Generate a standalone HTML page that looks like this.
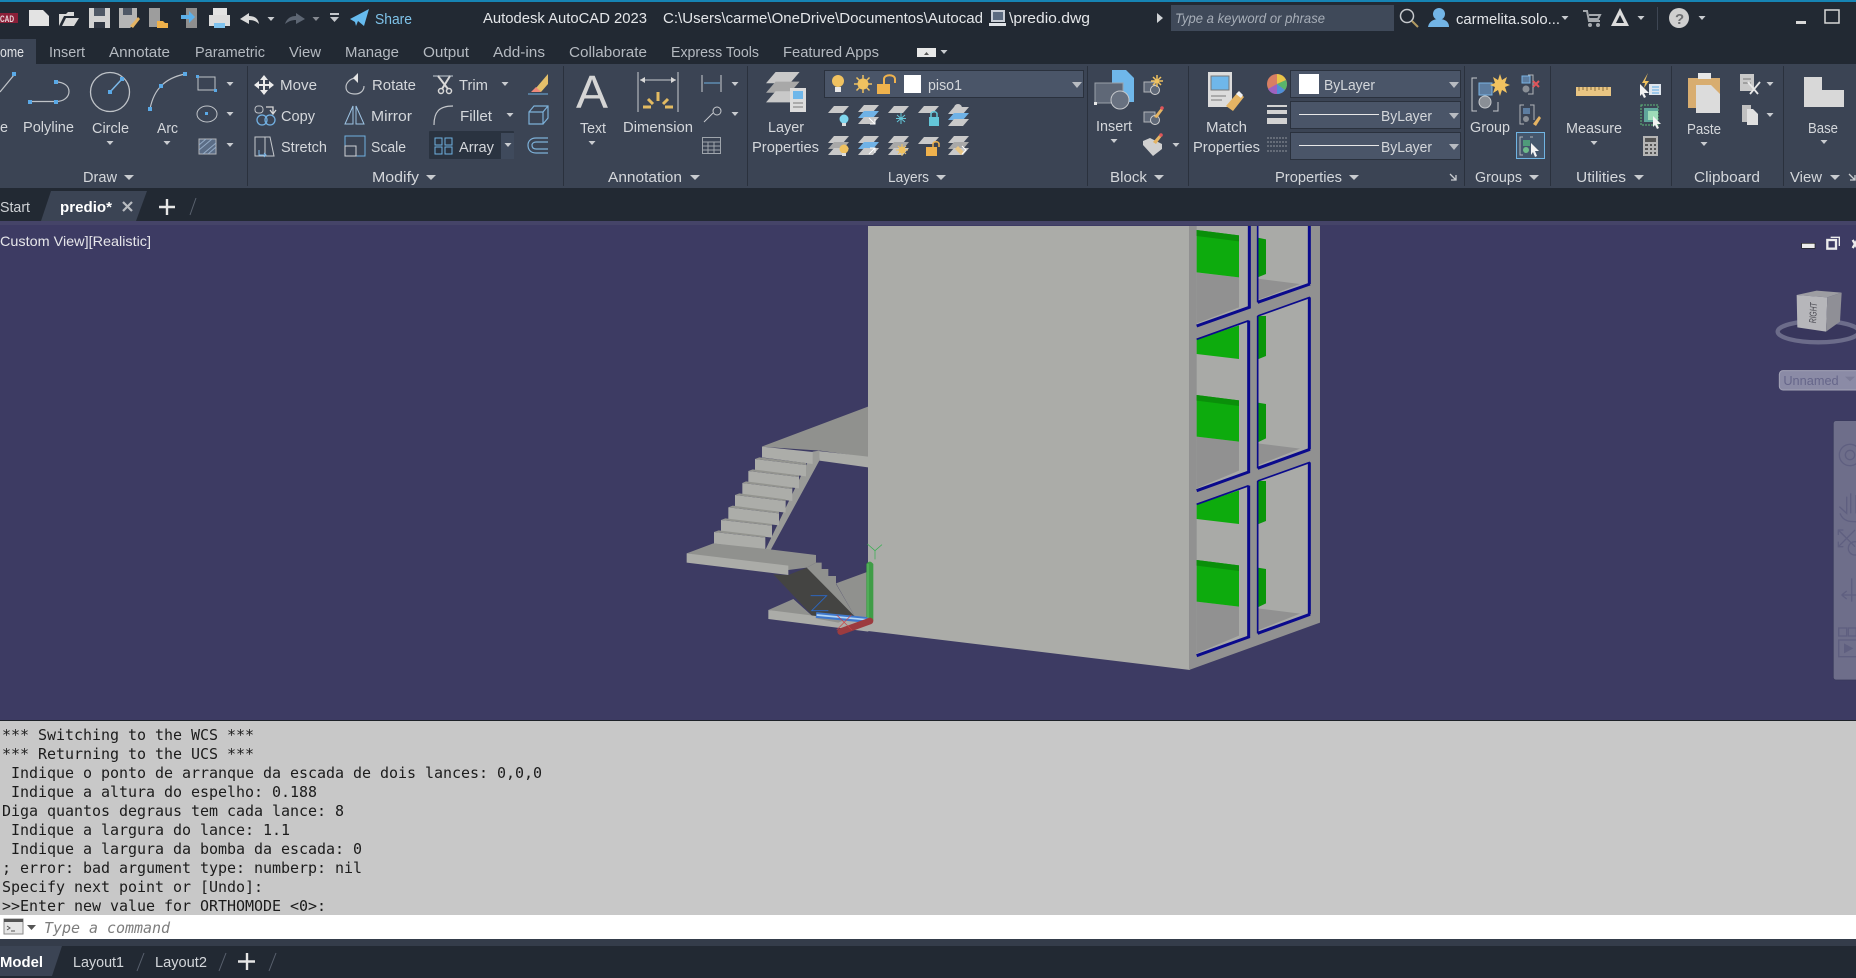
<!DOCTYPE html>
<html><head><meta charset="utf-8"><title>AutoCAD</title>
<style>
html,body{margin:0;padding:0;background:#222933;width:1856px;height:978px;overflow:hidden}
svg{display:block;position:absolute;left:0;top:0}
text{font-family:"Liberation Sans",sans-serif;font-size:15px;fill:#d4d7db}
.t{fill:#b5bac1}
.m{font-family:"DejaVu Sans Mono","Liberation Mono",monospace;font-size:15px;fill:#1c1c1c;letter-spacing:-.03px;white-space:pre}
</style></head><body>
<svg width="1856" height="978" viewBox="0 0 1856 978" xmlns="http://www.w3.org/2000/svg">
<defs>
<path id="d" d="M-3.5-2h7L0 2z" fill="#c9ccd0"/>
<g id="p"><path d="M0 7L6 0H21L15 7z" fill="#c9c9c9"/></g>
<g id="s"><path d="M0 7L6 0H21L15 7z" fill="#c9c9c9"/><path d="M0 13L6 6H21L15 13z" fill="#a8a8a8"/><path d="M0 19L6 12H21L15 19z" fill="#c9c9c9"/></g>
<g id="sb"><path d="M0 7L6 0H21L15 7z" fill="#c9c9c9"/><path d="M0 13L6 6H21L15 13z" fill="#6fb2e6"/><path d="M0 19L6 12H21L15 19z" fill="#c9c9c9"/></g>
</defs>

<!-- base bars -->
<rect width="1856" height="978" fill="#222933"/>
<rect width="1856" height="2" fill="#1684b4"/>
<rect y="64" width="1856" height="124" fill="#3b4454"/>
<rect y="39" width="36" height="25" fill="#3b4454"/>

<!-- title bar icons -->
<rect x="0" y="13" width="18" height="10" fill="#8b1f38"/>
<text x="0" y="22" style="font-size:9px;font-weight:bold;fill:#e8d8dc" textLength="14" lengthAdjust="spacingAndGlyphs">CAD</text>
<path d="M29 10H43L49 16V26H29z" fill="#e3e3e3"/>
<path d="M59 14H66L68 12H74V16H64L59 26zM62 26L66 18H79L74 26z" fill="#d9d9d9"/>
<path d="M89 8H110V28H89z" fill="#d2d2d2"/><rect x="94" y="8" width="11" height="8" fill="#4f5866"/><rect x="94" y="22" width="11" height="6" fill="#2f3642"/>
<path d="M119 8H137V22L130 28H119z" fill="#b5b5b5"/><rect x="123" y="8" width="9" height="7" fill="#4f5866"/><path d="M130 26L138 17L140 19L133 28z" fill="#e5b463"/>
<path d="M149 8H160V27H149z" fill="#9d9d9d"/><path d="M157 21H163L165 23H168V28H157z" fill="#eeb04a"/>
<path d="M186 8H197V28H186z" fill="#8f8f8f"/><path d="M181 15H189V11L195 17L189 23V19H181z" fill="#5cb0ea"/>
<path d="M213 8H227V15H213z" fill="#e3e3e3"/><path d="M209 15H230V26H225V23H214V26H209z" fill="#dcdcdc"/><rect x="214" y="23" width="11" height="5" fill="#7ec2ee"/>
<path d="M240 19L249 13V16C254 16 258 18 259 24C256 21 253 20 249 20V24z" fill="#dadada"/>
<use href="#d" x="271" y="19"/>
<path d="M305 19L296 13V16C291 16 287 18 285 24C289 21 292 20 296 20V24z" fill="#5d6673"/>
<use href="#d" x="316" y="19" opacity=".6"/>
<path d="M330 13h9v2h-9zM330 17h9l-4.500 5z" fill="#c4c7cb"/>
<path d="M350 19L369 9L364 26L358 21L356 26L355 22z" fill="#66bbef"/>
<text x="375" y="24" style="fill:#7fc3ea" textLength="37" lengthAdjust="spacingAndGlyphs">Share</text>

<text x="483" y="23" style="fill:#e4e6e9" textLength="164" lengthAdjust="spacingAndGlyphs">Autodesk AutoCAD 2023</text>
<text x="663" y="23" style="fill:#e4e6e9" textLength="320" lengthAdjust="spacingAndGlyphs">C:\Users\carme\OneDrive\Documentos\Autocad</text>
<rect x="991" y="10" width="14" height="12" fill="#c9ced6"/><rect x="993" y="12" width="10" height="8" fill="#5c6b80"/><rect x="989" y="23" width="17" height="3" fill="#dfe2e6"/>
<text x="1009" y="23" style="fill:#e4e6e9" textLength="81" lengthAdjust="spacingAndGlyphs">\predio.dwg</text>
<path d="M1157 13l6 5-6 5z" fill="#d0d3d6"/>
<rect x="1171" y="5" width="223" height="26" fill="#3f4959"/>
<text x="1175" y="23" style="font-style:italic;fill:#a7aeb8;font-size:14px" textLength="150" lengthAdjust="spacingAndGlyphs">Type a keyword or phrase</text>
<circle cx="1407" cy="16" r="6.500" fill="none" stroke="#c6c9cd" stroke-width="1.500"/><path d="M1412 21L1418 27" stroke="#b29a62" stroke-width="2"/>
<circle cx="1439" cy="14" r="6" fill="#72b4e6"/><path d="M1428 27C1429 21 1434 19 1439 19C1444 19 1449 21 1449 27z" fill="#72b4e6"/>
<text x="1456" y="24" style="fill:#e4e6e9" textLength="104" lengthAdjust="spacingAndGlyphs">carmelita.solo...</text>
<use href="#d" x="1565" y="18"/>
<path d="M1583 11H1587L1589 21H1600M1589 15H1600L1598 19H1589" fill="none" stroke="#a4a8ad" stroke-width="2"/><circle cx="1590" cy="25" r="2" fill="#a4a8ad"/><circle cx="1598" cy="25" r="2" fill="#a4a8ad"/>
<path d="M1620 8L1629 26H1611zM1620 15L1616 23H1624z" fill="#dcdcdc" fill-rule="evenodd"/>
<use href="#d" x="1641" y="18"/>
<rect x="1657" y="7" width="1" height="23" fill="#3e4654"/>
<circle cx="1679" cy="18" r="10" fill="#cfcfcf"/><text x="1675" y="24" style="font-weight:bold;font-size:15px;fill:#6d6f72">?</text>
<use href="#d" x="1702" y="18"/>
<rect x="1796" y="21" width="10" height="3" fill="#d8d8d8"/>
<rect x="1825" y="10" width="14" height="13" fill="none" stroke="#d8d8d8" stroke-width="1.500"/>

<!-- ribbon tabs -->
<text x="0" y="57" textLength="24" lengthAdjust="spacingAndGlyphs" style="fill:#e0e2e5">ome</text>
<g class="g">
<text class="t" x="49" y="57" textLength="36" lengthAdjust="spacingAndGlyphs">Insert</text>
<text class="t" x="109" y="57" textLength="61" lengthAdjust="spacingAndGlyphs">Annotate</text>
<text class="t" x="195" y="57" textLength="70" lengthAdjust="spacingAndGlyphs">Parametric</text>
<text class="t" x="289" y="57" textLength="32" lengthAdjust="spacingAndGlyphs">View</text>
<text class="t" x="345" y="57" textLength="54" lengthAdjust="spacingAndGlyphs">Manage</text>
<text class="t" x="423" y="57" textLength="46" lengthAdjust="spacingAndGlyphs">Output</text>
<text class="t" x="493" y="57" textLength="52" lengthAdjust="spacingAndGlyphs">Add-ins</text>
<text class="t" x="569" y="57" textLength="78" lengthAdjust="spacingAndGlyphs">Collaborate</text>
<text class="t" x="671" y="57" textLength="88" lengthAdjust="spacingAndGlyphs">Express Tools</text>
<text class="t" x="783" y="57" textLength="96" lengthAdjust="spacingAndGlyphs">Featured Apps</text>
</g>
<rect x="917" y="48" width="19" height="9" fill="#e8e8e8"/><path d="M924 55l2.500-3 2.500 3z" fill="#555"/><use href="#d" x="944" y="52"/>

<!-- separators -->
<g fill="#2a313d">
<rect x="247" y="66" width="1" height="120"/><rect x="563" y="66" width="1" height="120"/><rect x="747" y="66" width="1" height="120"/><rect x="1087" y="66" width="1" height="120"/><rect x="1188" y="66" width="1" height="120"/><rect x="1464" y="66" width="1" height="120"/><rect x="1550" y="66" width="1" height="120"/><rect x="1671" y="66" width="1" height="120"/><rect x="1783" y="66" width="1" height="120"/>
</g>

<!-- panel labels -->
<g>
<text x="83" y="182" textLength="34" lengthAdjust="spacingAndGlyphs">Draw</text><path d="M124 175h10l-5 5z" fill="#c9ccd0"/>
<text x="372" y="182" textLength="47" lengthAdjust="spacingAndGlyphs">Modify</text><path d="M426 175h10l-5 5z" fill="#c9ccd0"/>
<text x="608" y="182" textLength="74" lengthAdjust="spacingAndGlyphs">Annotation</text><path d="M690 175h10l-5 5z" fill="#c9ccd0"/>
<text x="888" y="182" textLength="41" lengthAdjust="spacingAndGlyphs">Layers</text><path d="M936 175h10l-5 5z" fill="#c9ccd0"/>
<text x="1110" y="182" textLength="37" lengthAdjust="spacingAndGlyphs">Block</text><path d="M1154 175h10l-5 5z" fill="#c9ccd0"/>
<text x="1275" y="182" textLength="67" lengthAdjust="spacingAndGlyphs">Properties</text><path d="M1349 175h10l-5 5z" fill="#c9ccd0"/>
<path d="M1450 174l6 6m0-5v5h-5" fill="none" stroke="#c9ccd0" stroke-width="1.300"/>
<text x="1475" y="182" textLength="47" lengthAdjust="spacingAndGlyphs">Groups</text><path d="M1529 175h10l-5 5z" fill="#c9ccd0"/>
<text x="1576" y="182" textLength="50" lengthAdjust="spacingAndGlyphs">Utilities</text><path d="M1634 175h10l-5 5z" fill="#c9ccd0"/>
<text x="1694" y="182" textLength="66" lengthAdjust="spacingAndGlyphs">Clipboard</text>
<text x="1790" y="182" textLength="32" lengthAdjust="spacingAndGlyphs">View</text><path d="M1830 175h10l-5 5z" fill="#c9ccd0"/>
<path d="M1849 174l6 6m0-5v5h-5" fill="none" stroke="#c9ccd0" stroke-width="1.300"/>
</g>

<!-- Draw -->
<path d="M0 92L14 75" stroke="#bfc3c8" stroke-width="1.200"/><rect x="12" y="72" width="4" height="4" fill="#5aa9e6"/>
<text x="0" y="132" textLength="8" lengthAdjust="spacingAndGlyphs">e</text>
<path d="M30 101.500H56C64 101.500 69 97 69 91.500C69 86 64 82 56 82" fill="none" stroke="#bfc3c8" stroke-width="1.200"/>
<rect x="28" y="100" width="4" height="4" fill="#5aa9e6"/><rect x="54" y="100" width="4" height="4" fill="#5aa9e6"/><rect x="54" y="80" width="4" height="4" fill="#5aa9e6"/>
<text x="23" y="132" textLength="51" lengthAdjust="spacingAndGlyphs">Polyline</text>
<circle cx="110" cy="92" r="19.500" fill="none" stroke="#bfc3c8" stroke-width="1.300"/><path d="M110 92L122 79" stroke="#7cb8e8" stroke-width="1.500"/><rect x="108" y="90" width="4" height="4" fill="#5aa9e6"/><rect x="120" y="77" width="4" height="4" fill="#5aa9e6"/>
<text x="92" y="133" textLength="37" lengthAdjust="spacingAndGlyphs">Circle</text><use href="#d" x="110" y="143"/>
<path d="M150 109C154 88 166 78 185 74" fill="none" stroke="#bfc3c8" stroke-width="1.200"/><rect x="148" y="107" width="4" height="4" fill="#5aa9e6"/><rect x="159" y="84" width="4" height="4" fill="#5aa9e6"/><rect x="183" y="72" width="4" height="4" fill="#5aa9e6"/>
<text x="157" y="133" textLength="21" lengthAdjust="spacingAndGlyphs">Arc</text><use href="#d" x="167" y="143"/>
<rect x="198" y="77" width="17" height="13" fill="none" stroke="#bfc3c8"/><rect x="196" y="75" width="3" height="3" fill="#5aa9e6"/><rect x="214" y="89" width="3" height="3" fill="#5aa9e6"/><use href="#d" x="230" y="84"/>
<ellipse cx="207" cy="114" rx="10" ry="8" fill="none" stroke="#bfc3c8"/><rect x="205" y="112" width="3" height="3" fill="#5aa9e6"/><use href="#d" x="230" y="114"/>
<rect x="199" y="139" width="17" height="15" fill="#5b6d86" stroke="#b0b4b9"/><path d="M199 150L212 139M203 154L216 143M199 145L206 139M208 154L216 147" stroke="#94abc6"/><use href="#d" x="230" y="145"/>

<!-- Modify -->
<path d="M264 75l4 5h-3v4h4v-3l5 4-5 4v-3h-4v4h3l-4 5-4-5h3v-4h-4v3l-5-4 5-4v3h4v-4h-3z" fill="#ececec"/>
<text x="280" y="90" textLength="37" lengthAdjust="spacingAndGlyphs">Move</text>
<rect x="255" y="106" width="8" height="7" rx="3" fill="none" stroke="#bfc3c8"/><path d="M266 107h7v6M270 110l3 4 3-4" fill="none" stroke="#d8d8d8" stroke-width="1.300"/><circle cx="262" cy="120" r="5" fill="none" stroke="#72b0e2" stroke-width="1.300"/><circle cx="270" cy="120" r="5" fill="none" stroke="#72b0e2" stroke-width="1.300"/>
<text x="281" y="121" textLength="34" lengthAdjust="spacingAndGlyphs">Copy</text>
<path d="M255 137h10v19h-10zM265 137h5l4 19h-9" fill="none" stroke="#c5c8cc"/><path d="M259 150v5h7m-2-2l2 2-2 2" fill="none" stroke="#7cb8e8"/>
<text x="281" y="152" textLength="46" lengthAdjust="spacingAndGlyphs">Stretch</text>
<path d="M357 78C349 78 346 84 346 87C346 92 350 94 355 94C360 94 364 91 364 86" fill="none" stroke="#bfc3c8" stroke-width="1.200"/><path d="M353 78L358 73V83z" fill="#e4e4e4"/>
<text x="372" y="90" textLength="44" lengthAdjust="spacingAndGlyphs">Rotate</text>
<path d="M353 106L345 124H353zM356 106L364 124H356z" fill="none" stroke="#9ec4e4"/>
<text x="371" y="121" textLength="41" lengthAdjust="spacingAndGlyphs">Mirror</text>
<rect x="345" y="136" width="20" height="20" fill="none" stroke="#6fb0e0"/><rect x="345" y="146" width="11" height="10" fill="none" stroke="#cfd2d6"/>
<text x="371" y="152" textLength="35" lengthAdjust="spacingAndGlyphs">Scale</text>
<path d="M433 76H453" stroke="#7f8894" stroke-width="2"/><path d="M438 76L448 89M450 76L442 89" stroke="#d8d8d8" stroke-width="2"/><circle cx="441" cy="91" r="2.500" fill="none" stroke="#d8d8d8" stroke-width="1.500"/><circle cx="449" cy="91" r="2.500" fill="none" stroke="#d8d8d8" stroke-width="1.500"/>
<text x="459" y="90" textLength="29" lengthAdjust="spacingAndGlyphs">Trim</text><use href="#d" x="505" y="84"/>
<path d="M434 125C434 112 439 106 453 106" fill="none" stroke="#c5c8cc" stroke-width="1.200"/>
<text x="460" y="121" textLength="32" lengthAdjust="spacingAndGlyphs">Fillet</text><use href="#d" x="510" y="115"/>
<rect x="429" y="131" width="85" height="28" fill="#2a3340" rx="1"/><rect x="501" y="133" width="13" height="26" fill="#3f4a5c"/><use href="#d" x="508" y="145"/>
<g fill="none" stroke="#6fb0e0"><rect x="435" y="138" width="7" height="7"/><rect x="445" y="138" width="7" height="7"/><rect x="435" y="147" width="7" height="7"/><rect x="445" y="147" width="7" height="7"/></g>
<text x="459" y="152" textLength="35" lengthAdjust="spacingAndGlyphs">Array</text>
<path d="M536 88L548 74V84L541 92z" fill="#e5c06a"/><path d="M531 92L536 87L541 92z" fill="#ef8a7a"/><path d="M528 94H548" stroke="#6fb0e0"/>
<path d="M529 112h14v12h-14zM529 112l5-6h14v12l-5 6M543 112l5-6" fill="none" stroke="#7cb0d8" stroke-width="1.200"/>
<path d="M548 138H536C530 138 528 142 528 145C528 149 530 153 536 153H548M548 142H536C533 142 532 144 532 145C532 147 533 149 536 149H548" fill="none" stroke="#7cb0d8" stroke-width="1.200"/>

<!-- Annotation -->
<text x="576" y="108" style="font-size:46px;fill:#d5d5d5" textLength="32" lengthAdjust="spacingAndGlyphs">A</text>
<text x="580" y="133" textLength="26" lengthAdjust="spacingAndGlyphs">Text</text><use href="#d" x="592" y="143"/>
<path d="M638 72V112M678 72V112M640 80H676" stroke="#c8cbcf" fill="none"/><path d="M640 80l5-3v6zM676 80l-5-3v6z" fill="#d8d8d8"/>
<path d="M658 92v9M648 99l5 5M668 99l-5 5M643 107h8M673 107h-8" stroke="#e3bb62" stroke-width="3"/>
<text x="623" y="132" textLength="70" lengthAdjust="spacingAndGlyphs">Dimension</text>
<path d="M702 75V92M721 75V92" stroke="#c8cbcf" fill="none"/><path d="M704 83H720" stroke="#6fb0e0"/><use href="#d" x="735" y="84"/>
<circle cx="717" cy="111" r="4" fill="none" stroke="#c8cbcf"/><path d="M713 113L704 122" stroke="#c8cbcf"/><use href="#d" x="735" y="114"/>
<g fill="none" stroke="#9fa5ac"><rect x="702.500" y="137.500" width="18" height="16"/><path d="M702 142h19M702 146h19M702 150h19M708 142v12M714 142v12"/></g>

<!-- Layers -->
<use href="#s" transform="translate(766 72) scale(1.600 1.600)"/>
<rect x="790" y="88" width="16" height="24" fill="#dcdcdc"/><rect x="793" y="91" width="10" height="8" fill="#6fb7ea"/><path d="M793 103h10M793 107h10" stroke="#7a7a7a"/>
<text x="768" y="132" textLength="36" lengthAdjust="spacingAndGlyphs">Layer</text>
<text x="752" y="152" textLength="67" lengthAdjust="spacingAndGlyphs">Properties</text>
<rect x="824.500" y="70.500" width="259" height="27" fill="#4a5568" stroke="#2a313d"/>
<circle cx="838" cy="81" r="6" fill="#f0c260"/><rect x="835" y="87" width="6" height="5" fill="#e8e8e8"/>
<circle cx="863" cy="84" r="5.500" fill="#f0c260"/><path d="M863 75v18M854 84h18M856.500 77.500l13 13M869.500 77.500l-13 13" stroke="#f0c260" stroke-width="1.500"/>
<rect x="877" y="84" width="13" height="10" fill="#efb24d"/><path d="M884 84V79C884 74 895 74 895 79V83" fill="none" stroke="#efb24d" stroke-width="2"/>
<rect x="904" y="75" width="17" height="18" fill="#fff"/>
<text x="928" y="90" textLength="34" lengthAdjust="spacingAndGlyphs">piso1</text>
<path d="M1072 82h10l-5 6z" fill="#b8bcc2"/>
<use href="#p" x="828" y="106"/><circle cx="844" cy="119" r="4.500" fill="#7fd6ee"/><rect x="842" y="123" width="4" height="3" fill="#ddd"/>
<use href="#sb" x="858" y="105"/><path d="M869 118l6 6m0-5v5h-5" stroke="#fff" fill="none"/>
<use href="#p" x="888" y="106"/><path d="M901 113v11M896 118.500h10M897 115l8 7M905 115l-8 7" stroke="#63c6d8"/>
<use href="#p" x="918" y="106"/><rect x="929" y="117" width="10" height="9" fill="#63c6d8"/><path d="M931 117v-3c0-3 6-3 6 0v3" fill="none" stroke="#63c6d8" stroke-width="1.500"/>
<use href="#sb" x="948" y="107"/><circle cx="958" cy="108" r="4" fill="#c9c9c9"/>
<use href="#s" x="828" y="136"/><circle cx="844" cy="149" r="4.500" fill="#f0c260"/><rect x="842" y="153" width="4" height="3" fill="#ddd"/>
<use href="#sb" x="858" y="136"/><path d="M869 154l6-6m-5 0h5v5" stroke="#fff" fill="none"/>
<use href="#s" x="888" y="136"/><circle cx="902" cy="150" r="3.500" fill="#f0c260"/><path d="M902 144v12M896 150h12M898 146l8 8M906 146l-8 8" stroke="#f0c260"/>
<use href="#p" x="918" y="137"/><rect x="926" y="147" width="11" height="9" fill="#efb24d"/><path d="M933 147v-3c0-3 6-3 6 0v3" fill="none" stroke="#efb24d" stroke-width="1.500"/>
<use href="#s" x="948" y="136"/><path d="M958 146l6 6-3 3-6-6z" fill="#e8c583"/><path d="M962 146l4 4-4 4" stroke="#fff" fill="none"/>

<!-- Block -->
<path d="M1112 70h14l8 8v24h-22z" fill="#6fb7ea"/><rect x="1095" y="83" width="28" height="20" fill="#5f6877" stroke="#9aa0a8"/><circle cx="1120" cy="100" r="9" fill="#687180" stroke="#c5c8cc"/>
<rect x="1094" y="102" width="3" height="3" fill="#e8e8e8"/>
<text x="1096" y="131" textLength="36" lengthAdjust="spacingAndGlyphs">Insert</text><use href="#d" x="1114" y="141"/>
<rect x="1144" y="82" width="11" height="10" fill="#5f6877" stroke="#b0b4b9"/><circle cx="1155" cy="90" r="4.500" fill="#5f6877" stroke="#d0d0d0"/><path d="M1157 75v12M1151 81h12M1153 77l8 8M1161 77l-8 8" stroke="#f0c260" stroke-width="1.500"/>
<rect x="1144" y="112" width="11" height="10" fill="#5f6877" stroke="#b0b4b9"/><circle cx="1155" cy="120" r="4.500" fill="#5f6877" stroke="#d0d0d0"/><path d="M1154 117l7-9 2 2-6 8z" fill="#e5b463"/><circle cx="1162" cy="108" r="1.800" fill="#e0555a"/>
<path d="M1143 141l7-3 12 6v5l-9 7-10-11z" fill="#d0d0d0"/><path d="M1153 142l7-8 2 2-6 8z" fill="#e5b463"/><circle cx="1161" cy="135" r="1.800" fill="#e0555a"/><use href="#d" x="1176" y="145"/>

<!-- Properties -->
<rect x="1208" y="72" width="24" height="35" fill="#dcdcdc"/><rect x="1211" y="76" width="18" height="14" fill="#6fb7ea" stroke="#777"/><path d="M1211 96h15M1211 100h11" stroke="#7a7a7a"/><path d="M1226 106l12-14 6 5-11 14z" fill="#e5b463"/><path d="M1236 94l3-3 4 4-2 3z" fill="#f0f0f0"/>
<text x="1206" y="132" textLength="41" lengthAdjust="spacingAndGlyphs">Match</text>
<text x="1193" y="152" textLength="67" lengthAdjust="spacingAndGlyphs">Properties</text>
<circle cx="1277" cy="84" r="10" fill="#d87f63"/><path d="M1277 84V74A10 10 0 0 1 1286 80z" fill="#e8c548"/><path d="M1277 84L1286 80A10 10 0 0 1 1285 90z" fill="#59b56b"/><path d="M1277 84L1285 90A10 10 0 0 1 1277 94z" fill="#4f8fd8"/><path d="M1277 84V94A10 10 0 0 1 1268 89z" fill="#9e62c0"/>
<path d="M1267 105h20v2h-20zM1267 110h20v4h-20zM1267 118h20v6h-20z" fill="#d2d2d2"/>
<path d="M1267 138h20M1267 142h20M1267 146h20M1267 151h20" stroke="#8f949b" stroke-dasharray="2 1"/>
<g fill="#4a5568" stroke="#2a313d"><rect x="1290.500" y="70.500" width="170" height="27"/><rect x="1290.500" y="101.500" width="170" height="27"/><rect x="1290.500" y="132.500" width="170" height="27"/></g>
<rect x="1299" y="74" width="20" height="20" fill="#fff"/>
<text x="1324" y="90" textLength="51" lengthAdjust="spacingAndGlyphs">ByLayer</text>
<path d="M1299 114.500h80M1299 145.500h80" stroke="#e8e8e8"/>
<text x="1381" y="121" textLength="51" lengthAdjust="spacingAndGlyphs">ByLayer</text>
<text x="1381" y="152" textLength="51" lengthAdjust="spacingAndGlyphs">ByLayer</text>
<path d="M1449 82h10l-5 6zM1449 113h10l-5 6zM1449 144h10l-5 6z" fill="#b8bcc2"/>

<!-- Groups -->
<path d="M1477 78h-5v33h5M1498 102v9h-5" fill="none" stroke="#c5c8cc"/><rect x="1479" y="83" width="13" height="12" fill="#5d7da0" stroke="#7ab4e4"/><circle cx="1485" cy="102" r="6" fill="#8a8f96" stroke="#c5c8cc"/>
<path d="M1500 73l2 6 5-3-2 6 5 2-5 2 2 6-5-3-2 6-2-6-5 3 2-6-5-2 5-2-2-6 5 3z" fill="#f0c260" transform="translate(0 1)"/>
<text x="1470" y="132" textLength="40" lengthAdjust="spacingAndGlyphs">Group</text>
<path d="M1527 75h5v19h-5" fill="none" stroke="#b0b4b9" transform="translate(1)"/><rect x="1522" y="76" width="8" height="7" fill="#5d7da0" stroke="#7ab4e4"/><circle cx="1526" cy="89" r="3.500" fill="#8a8f96"/><path d="M1533 81l6 6m0-6l-6 6" stroke="#e0555a" stroke-width="2"/>
<path d="M1524 105h-4v19h4M1530 105h4v15" fill="none" stroke="#b0b4b9"/><rect x="1523" y="108" width="7" height="6" fill="#5d7da0"/><circle cx="1526" cy="119" r="3" fill="#8a8f96"/><path d="M1533 124l6-8 2 2-5 8z" fill="#e5b463"/>
<rect x="1516.500" y="132.500" width="28" height="26" fill="#44566c" stroke="#70b4e2"/><path d="M1523 137h-3v18h3M1530 137h3" fill="none" stroke="#b0b4b9"/><rect x="1523" y="140" width="7" height="6" fill="#4f9b7a"/><circle cx="1526" cy="150" r="3" fill="#6dbb8a"/><path d="M1531 143l8 8-4 0 2 5-2 1-2-5-2 3z" fill="#f2f2f2"/>

<!-- Utilities -->
<rect x="1576" y="87" width="35" height="9" fill="#e8c583"/><path d="M1579 87v4M1583 87v3M1587 87v4M1591 87v3M1595 87v4M1599 87v3M1603 87v4M1607 87v3" stroke="#8a6f3c"/>
<text x="1566" y="133" textLength="56" lengthAdjust="spacingAndGlyphs">Measure</text><use href="#d" x="1594" y="143"/>
<path d="M1648 73l-3 8h4l-5 7 1-5h-3z" fill="#f0c260"/><rect x="1649" y="84" width="12" height="11" fill="#dfe6ee"/><path d="M1652 87h7M1652 90h7M1652 93h7" stroke="#5aa9e6"/><path d="M1640 84l9 9h-5l2 4-2 1-2-4-2 2z" fill="#f2f2f2"/>
<rect x="1641" y="105" width="17" height="20" fill="none" stroke="#5fbb7a" stroke-dasharray="2 1"/><rect x="1644" y="108" width="14" height="14" fill="#5fa59a"/><rect x="1648" y="111" width="10" height="9" fill="#9edbb8"/><path d="M1653 116l8 8-4 0 2 4-2 1-2-4-2 2z" fill="#f2f2f2"/>
<rect x="1643" y="136" width="15" height="20" fill="#b5b5b5"/><rect x="1645" y="138" width="11" height="4" fill="#555"/><path d="M1645 145h3M1650 145h2M1654 145h2M1645 149h3M1650 149h2M1654 149h2M1645 153h3M1650 153h2M1654 153h2" stroke="#555" stroke-width="2"/>

<!-- Clipboard -->
<path d="M1688 78h32v30h-32z" fill="#d8ad70"/><rect x="1698" y="73" width="13" height="6" fill="#e8e8e8"/><path d="M1696 85h15l9 9v19h-24z" fill="#dcdcdc"/>
<text x="1687" y="134" textLength="34" lengthAdjust="spacingAndGlyphs">Paste</text><use href="#d" x="1704" y="144"/>
<rect x="1740" y="74" width="14" height="17" fill="#c9c9c9"/><path d="M1743 79h8M1743 83h8" stroke="#777"/><path d="M1748 82l10 12M1760 82l-10 12" stroke="#e8e8e8" stroke-width="1.800"/>
<use href="#d" x="1770" y="84"/>
<rect x="1742" y="105" width="9" height="17" fill="#c0c0c0"/><path d="M1747 109h6l5 5v11h-11z" fill="#e0e0e0"/>
<use href="#d" x="1770" y="115"/>

<!-- View -->
<path d="M1804 77h18v13h22v17h-40z" fill="#d8d8d8"/>
<text x="1808" y="133" textLength="30" lengthAdjust="spacingAndGlyphs">Base</text><use href="#d" x="1824" y="142"/>

<!-- Document tab bar -->
<text x="0" y="212" textLength="30" lengthAdjust="spacingAndGlyphs" style="fill:#cfd2d6">Start</text>
<path d="M41 221L51 191H147L136 221z" fill="#3b4454"/>
<text x="60" y="212" textLength="52" lengthAdjust="spacingAndGlyphs" style="fill:#fff;font-weight:bold">predio*</text>
<path d="M123 202l9 9m0-9l-9 9" stroke="#b9bcc1" stroke-width="2.200"/>
<path d="M167 199v16M159 207h16" stroke="#e6e6e6" stroke-width="2.400"/>
<path d="M190 215l6-17" stroke="#59616e"/>

<!-- Viewport -->
<rect y="221" width="1856" height="500" fill="#3d3b63"/>
<rect y="221" width="1856" height="4" fill="#454468"/>
<text x="0" y="246" textLength="151" lengthAdjust="spacingAndGlyphs" style="fill:#e6e6ea;font-size:14px">Custom View][Realistic]</text>

<!-- Building front -->
<path d="M868 226H1190V670L868 631z" fill="#abaca8"/>

<g transform="translate(660 400) scale(.33333)">
<path d="M305 140L624 20V172L480 152z" fill="#90918e"/>
<path d="M475 153L624 170V202L478 182z" fill="#abaca8"/>
<path d="M458 155L478 152L478 182L332 450L316 450z" fill="#9a9b98"/>
<g fill="#acada9">
<path d="M306 140L458 156V192L306 172z"/><path d="M285 177L438 195V229L285 211z"/><path d="M265 213L417 231V265L265 247z"/><path d="M247 249L397 267V303L247 285z"/><path d="M225 285L377 303V338L225 320z"/><path d="M205 322L357 340V376L205 358z"/><path d="M183 360L336 377V413L183 395z"/><path d="M162 396L316 413V449L162 431z"/>
</g>
<g fill="#93948f">
<path d="M285 177L438 195V189L298 172z"/><path d="M265 213L417 231V226L278 208z"/><path d="M247 249L397 267V262L258 244z"/><path d="M225 285L377 303V298L238 280z"/><path d="M205 322L357 340V335L218 317z"/><path d="M183 360L336 377V372L196 355z"/><path d="M162 396L316 413V408L176 391z"/>
</g>
<path d="M528 550L624 515V690L585 650z" fill="#90918e"/>
<path d="M385 510L440 503L468 488V465L330 448L160 430L80 460z" fill="#90918e"/>
<path d="M440 503L468 488H485V507H505V528H528V552L585 650L460 640z" fill="#90918e"/>
<path d="M340 523L385 525L440 503L585 650L465 655z" fill="#444442"/>
<path d="M80 460L385 497V525L80 488z" fill="#abaca8"/>
<path d="M325 630L400 597L465 655L535 665L624 690L530 668z" fill="#90918e"/>
<path d="M325 630L625 668V695L325 657z" fill="#abaca8"/>
<path d="M465 655L585 648L535 668z" fill="#90918e"/>
<!-- UCS -->
<path d="M619 492Q629 478 640 492V662H619z" fill="#3f9d47"/><path d="M624 492V660" stroke="#62bd68" stroke-width="3"/>
<path d="M622 432L645 452L666 434M645 452V478" fill="none" stroke="#2fb04a" stroke-width="2"/>
<path d="M468 645L622 660" stroke="#3f78cc" stroke-width="17" fill="none"/><path d="M470 645L620 659" stroke="#b3d5f5" stroke-width="5"/>
<path d="M452 587H500L455 632H505" fill="none" stroke="#2a6acc" stroke-width="2.500"/>
<path d="M542 695L630 663" stroke="#9c3b3f" stroke-width="20" stroke-linecap="round"/>
<path d="M530 645L576 690M574 645L530 690" stroke="#cc3f44" stroke-width="2"/>
</g>

<!-- Building side -->
<g transform="translate(1170 220) scale(.33333)">
<path d="M57 18H450V1208L57 1350z" fill="#919191"/>
<!-- top floor -->
<path d="M80 18H236V262L80 318z" fill="#a9aaa7"/>
<path d="M263 18H418V192L263 247z" fill="#a9aaa7"/>
<path d="M80 158L207 172V262L80 310z" fill="#919191"/>
<path d="M263 176L390 192L263 240z" fill="#919191"/>
<path d="M80 30L207 46V172L80 157z" fill="#0dab0d"/><path d="M80 30L207 46V64L80 48z" fill="#0a8f0a"/>
<path d="M263 53L288 58V162L263 172z" fill="#0a960a"/>
<path d="M80 318L238 262V18" fill="none" stroke="#0a0a8c" stroke-width="9"/>
<path d="M263 247L420 192M418 18V192" fill="none" stroke="#0a0a8c" stroke-width="9"/>
<path d="M263 18V247" stroke="#0a0a8c" stroke-width="5"/>
<g id="fl">
<path d="M80 358L236 302V756L80 812z" fill="#a9aaa7"/>
<path d="M263 288L418 232V688L263 745z" fill="#a9aaa7"/>
<path d="M80 650L207 665V752L80 805z" fill="#919191"/>
<path d="M263 670L390 686L263 736z" fill="#919191"/>
<path d="M80 358L207 316V417L80 402z" fill="#0dab0d"/>
<path d="M80 525L207 541V665L80 650z" fill="#0dab0d"/><path d="M80 525L207 541V558L80 542z" fill="#0a8f0a"/>
<path d="M263 288L288 288V408L263 418z" fill="#0a960a"/>
<path d="M263 548L288 552V655L263 667z" fill="#0a960a"/>
<path d="M80 358L236 302" stroke="#0a0a8c" stroke-width="5" fill="none"/>
<path d="M236 302V756L80 812" stroke="#0a0a8c" stroke-width="9" fill="none"/>
<path d="M263 745L420 688" stroke="#0a0a8c" stroke-width="9" fill="none"/>
<path d="M418 232V688" stroke="#0a0a8c" stroke-width="9" fill="none"/>
<path d="M263 288L420 232" stroke="#0a0a8c" stroke-width="5" fill="none"/>
<path d="M263 288V745" stroke="#0a0a8c" stroke-width="5" fill="none"/>
</g>
<use href="#fl" y="495"/>
</g>

<!-- View controls -->
<g transform="translate(1740 220) scale(.33333)">
<ellipse cx="235" cy="335" rx="122" ry="32" fill="#38365c" stroke="#6c6c8a" stroke-width="13"/>
<path d="M170 225L230 212L305 218L262 232z" fill="#9d9da2"/>
<path d="M170 225L262 232L258 335L172 322z" fill="#b6b6ba"/>
<path d="M262 232L305 218L300 305L258 335z" fill="#8f8f96"/>
<text x="228" y="310" transform="rotate(-87 228 310)" style="font-size:30px;font-style:italic;fill:#46464e" textLength="62" lengthAdjust="spacingAndGlyphs">RIGHT</text>
<rect x="185" y="70" width="40" height="15" fill="#ececec" stroke="#222" stroke-width="2"/>
<rect x="262" y="60" width="26" height="26" fill="none" stroke="#ececec" stroke-width="7"/><path d="M272 52H298V78" fill="none" stroke="#ececec" stroke-width="4"/>
<path d="M338 60L352 84M352 60L338 84" stroke="#ececec" stroke-width="7"/>
<rect x="118" y="452" width="260" height="58" rx="11" fill="#8b8ba6" stroke="#a3a3b6" stroke-width="3"/>
<text x="130" y="495" style="font-size:40px;fill:#66668a" textLength="166" lengthAdjust="spacingAndGlyphs">Unnamed</text>
<path d="M315 470h30l-15 14z" fill="#7c7c98"/>
<rect x="280" y="602" width="120" height="778" rx="8" fill="#6e6e8a" stroke="#383a5c" stroke-width="2"/>
<g fill="none" stroke="#5f5f80" stroke-width="4">
<circle cx="330" cy="705" r="32"/><circle cx="330" cy="705" r="14"/>
<path d="M300 880C310 905 330 905 348 905M298 860L320 880V830M332 880V820M348 880V825"/>
<path d="M295 930L345 980M345 930L295 980M295 945V930H310M295 965V980H310"/><circle cx="345" cy="985" r="20"/>
<path d="M335 1075V1145M305 1125H348M305 1125l15-12M305 1125l15 12"/>
<rect x="296" y="1224" width="24" height="24"/><rect x="325" y="1224" width="24" height="24"/><rect x="296" y="1260" width="60" height="50"/>
</g>
<path d="M312 1270l28 15-28 15z" fill="#5f5f80"/>
</g>

<!-- Command history -->
<rect y="720" width="1856" height="1" fill="#1e2229"/>
<rect y="721" width="1856" height="194" fill="#c8c8c8"/>
<text class="m" x="2" y="740">*** Switching to the WCS ***</text>
<text class="m" x="2" y="759">*** Returning to the UCS ***</text>
<text class="m" x="2" y="778"> Indique o ponto de arranque da escada de dois lances: 0,0,0</text>
<text class="m" x="2" y="797"> Indique a altura do espelho: 0.188</text>
<text class="m" x="2" y="816">Diga quantos degraus tem cada lance: 8</text>
<text class="m" x="2" y="835"> Indique a largura do lance: 1.1</text>
<text class="m" x="2" y="854"> Indique a largura da bomba da escada: 0</text>
<text class="m" x="2" y="873">; error: bad argument type: numberp: nil</text>
<text class="m" x="2" y="892">Specify next point or [Undo]:</text>
<text class="m" x="2" y="911">&gt;&gt;Enter new value for ORTHOMODE &lt;0&gt;:</text>
<rect y="915" width="1856" height="24" fill="#fff"/>
<rect x="4" y="919" width="19" height="15" fill="#e6e6e6" stroke="#8a8a8a"/><rect x="4" y="919" width="19" height="3" fill="#555"/>
<path d="M7 926l3 2-3 2M11 931h4" stroke="#555" fill="none"/>
<path d="M27 925h9l-4.500 5z" fill="#555"/>
<text class="m" x="44" y="933" style="font-style:italic;fill:#7d7d7d">Type a command</text>
<rect y="939" width="1856" height="7" fill="#343c4a"/>

<!-- Layout tabs -->
<path d="M0 946H62L52 976H0z" fill="#3b4454"/>
<text x="0" y="967" textLength="43" lengthAdjust="spacingAndGlyphs" style="fill:#fff;font-weight:bold">Model</text>
<text x="73" y="967" textLength="51" lengthAdjust="spacingAndGlyphs" style="fill:#d4d7db">Layout1</text>
<path d="M137 971L144 953" stroke="#59616e"/>
<text x="155" y="967" textLength="52" lengthAdjust="spacingAndGlyphs" style="fill:#d4d7db">Layout2</text>
<path d="M219 971L226 953" stroke="#59616e"/>
<path d="M247 953v17M238 961.500h17" stroke="#e6e6e6" stroke-width="2.400"/>
<path d="M269 971L276 953" stroke="#59616e"/>
</svg>
</body></html>
